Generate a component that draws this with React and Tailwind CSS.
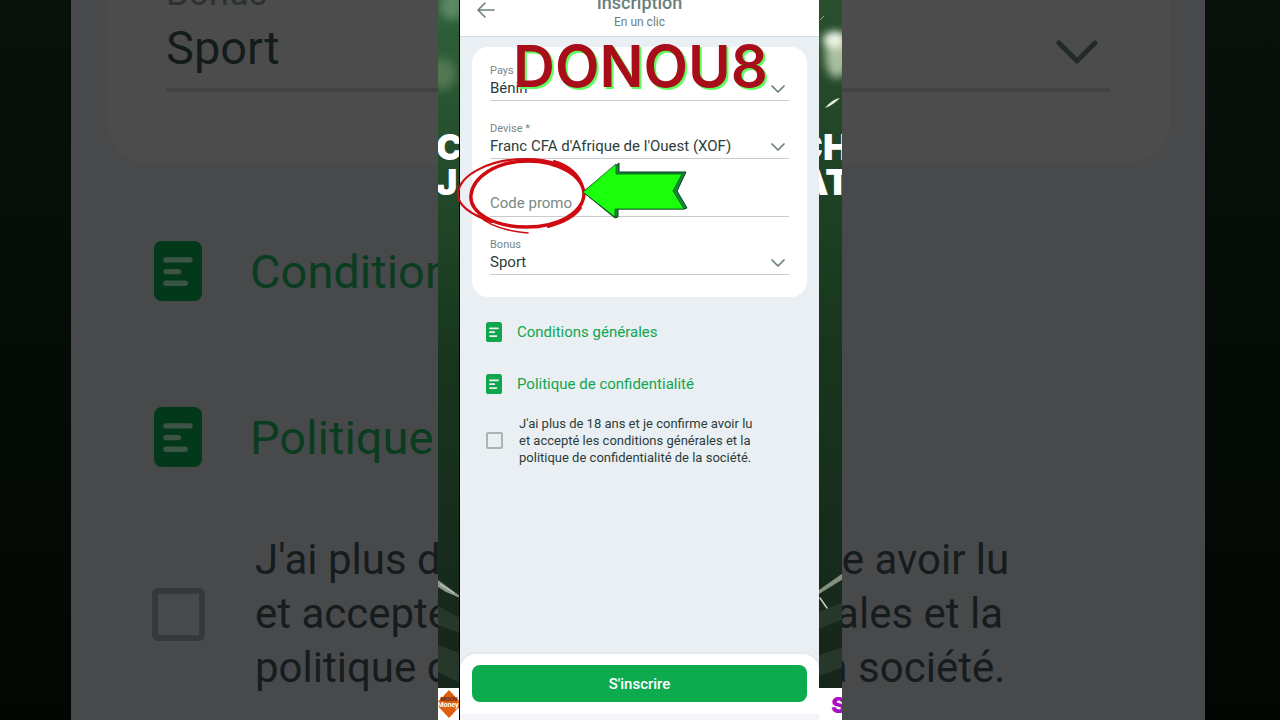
import { useState } from "react";

const CONSENT = [
  "J'ai plus de 18 ans et je confirme avoir lu",
  "et accepté les conditions générales et la",
  "politique de confidentialité de la société.",
];

function Chevron({ className }) {
  return (
    <svg viewBox="0 0 14 8" fill="none" stroke="currentColor" strokeWidth="1.7" strokeLinecap="round" strokeLinejoin="round" className={className}>
      <path d="M1 1l6 6 6-6" />
    </svg>
  );
}

function DocIcon({ className, lines }) {
  return (
    <svg viewBox="0 0 16 20" className={className}>
      <rect width="16" height="20" rx="2.6" fill="currentColor" />
      <path d="M4 6.3h8M4 10.2h4.2M4 14.1h6.4" stroke={lines} strokeWidth="1.8" strokeLinecap="round" />
    </svg>
  );
}

// Enlarged, dimmed copy of the form behind the video
function Backdrop() {
  return (
    <div aria-hidden="true" className="absolute inset-0 overflow-hidden bg-linear-to-b from-[#07110a] to-[#030704] pl-[71px] pr-[75px]">
      <div className="flow-root min-h-screen bg-[#48494b] pl-9 pr-[35px] whitespace-nowrap">
        <div className="rounded-b-[44px] bg-[#4c4c4c] pb-[72px] pl-[59px] pr-[60px]">
          <div className="border-b-4 border-[#414242]">
            <p className="-mt-[28px] h-[42px] text-[36px] leading-[42px] text-[#2c3231]">Bonus</p>
            <div className="flex h-[74px] items-start justify-between pr-3">
              <span className="pt-1 text-[47px] leading-[60px] text-[#141c1b]">Sport</span>
              <Chevron className="mt-[26px] h-6 w-[42px] text-[#232b29]" />
            </div>
          </div>
        </div>
        <div className="flex flex-col gap-[106px] pl-[47px] pt-[77px] text-[#0a3c20]">
          <div className="flex h-[60px] items-center gap-12">
            <DocIcon className="h-[60px] w-12 text-[#04381a]" lines="#3c5445" />
            <span className="pt-[2px] text-[47px] leading-[56px]">Conditions générales</span>
          </div>
          <div className="flex h-[60px] items-center gap-12">
            <DocIcon className="h-[60px] w-12 text-[#04381a]" lines="#3c5445" />
            <span className="pt-[2px] text-[47px] leading-[56px]">Politique de confidentialité</span>
          </div>
        </div>
        <div className="flex items-center gap-[50px] pl-[45px] pt-[66px] text-[42px] leading-[54px] text-[#161c1d]">
          <span className="size-[53px] shrink-0 rounded-md border-[6px] border-[#34393a]" />
          <p>{CONSENT.map((line) => <span key={line} className="block">{line}</span>)}</p>
        </div>
      </div>
    </div>
  );
}

function LeftRail() {
  return (
    <div className="relative flex min-h-screen w-[22px] shrink-0 flex-col overflow-hidden border-r border-black bg-linear-to-b from-[#2f6139] via-[#17351d] to-[#16241a]">
      <svg viewBox="0 0 22 690" className="absolute left-0 top-0 h-[690px] w-[22px]">
        <defs>
          <filter id="softL" x="-1" y="-1" width="3" height="3"><feGaussianBlur stdDeviation="5" /></filter>
        </defs>
        <ellipse cx="14" cy="6" rx="12" ry="14" fill="#6f9b78" opacity=".7" filter="url(#softL)" />
        <ellipse cx="4" cy="74" rx="14" ry="16" fill="#6b8f66" opacity=".6" filter="url(#softL)" />
        <path d="M0 606l22 12v15L0 625zM0 645l22 8v30L0 672z" fill="#2f3f31" opacity=".7" />
        <path d="M0 580l22 16v2L8 592 0 587z" fill="#8b998b" />
        <path d="M2 584l14 9" stroke="#dfe6dc" strokeWidth=".8" />
      </svg>
      <p className="relative -ml-[2px] pt-[130px] font-[Inter,sans-serif] text-[36px] font-black leading-[35px] text-white">C<br />J</p>
      <div className="relative mt-auto h-8 bg-white">
        <svg viewBox="0 0 22 32" className="h-8 w-[22px]">
          <path d="M11 2l13 14-13 14L-2 16z" fill="#dd5f10" />
          <text x="11" y="13" textAnchor="middle" fontSize="6" fontWeight="700" fill="#4a2b1c" fontFamily="Roboto, sans-serif">MOOV</text>
          <text x="10" y="19" textAnchor="middle" fontSize="7" fontWeight="700" fill="#fff" fontFamily="Roboto, sans-serif">Money</text>
        </svg>
      </div>
    </div>
  );
}

function RightRail() {
  return (
    <div className="relative flex min-h-screen w-[23px] shrink-0 flex-col items-end overflow-hidden bg-linear-to-b from-[#28502f] via-[#17351d] to-[#16241a]">
      <svg viewBox="0 0 23 690" className="absolute left-0 top-0 h-[690px] w-[23px]">
        <defs>
          <filter id="softR" x="-1" y="-1" width="3" height="3"><feGaussianBlur stdDeviation="4" /></filter>
        </defs>
        <ellipse cx="18" cy="56" rx="12" ry="22" fill="#a9bf9f" filter="url(#softR)" />
        <ellipse cx="15" cy="40" rx="11" ry="8" fill="#f3f8ea" filter="url(#softR)" />
        <path d="M6 108c4-5 9-9 15-10-4 4-9 8-15 10z" fill="#e4efd9" />
        <path d="M1 20l4-4" stroke="#8fae8c" />
        <path d="M0 612l24-10v17L0 629zM0 655l24-8v20L0 676z" fill="#2f3f31" opacity=".7" />
        <path d="M0 590l24-17v6L0 594z" fill="#84917f" />
        <path d="M1 598l7 10" stroke="#c5cfc0" strokeWidth="1.5" strokeLinecap="round" />
      </svg>
      <p className="relative -mr-2 pt-[130px] text-right font-[Inter,sans-serif] text-[36px] font-black leading-[35px] text-white">CH<br />AT</p>
      <div className="relative mt-auto flex h-8 w-full items-center justify-end overflow-hidden bg-white">
        <span className="-mr-1 pt-[2px] font-[Inter,sans-serif] text-[22px] font-black text-[#a80fc4]">S</span>
      </div>
    </div>
  );
}

function SelectField({ id, label, value }) {
  return (
    <div className="relative border-b border-[#c9cccc]">
      <label htmlFor={id} className="block text-[11px] leading-[16px] text-[#788885]">{label}</label>
      <select id={id} defaultValue={value} className="block h-[21px] w-full appearance-none bg-transparent pb-[3px] text-[15px] leading-[18px] text-[#2b3d3a] outline-none">
        <option>{value}</option>
      </select>
      <Chevron className="pointer-events-none absolute bottom-[7px] right-1 h-2 w-[14px] text-[#6b7f7b]" />
    </div>
  );
}

function PolicyLink({ children }) {
  return (
    <a href="#" className="flex h-5 items-center gap-[15px] text-[15px] text-[#10a64c]">
      <DocIcon className="h-5 w-4" lines="#eaeff4" />
      {children}
    </a>
  );
}

function Annotations() {
  return (
    <>
      <p className="pointer-events-none absolute left-[53px] top-[32px] font-[Inter,sans-serif] text-[58px] font-semibold leading-[68px] text-[#a80d1a] [text-shadow:2px_2px_0_#5dff5d]">DONOU8</p>
      <svg viewBox="0 0 240 90" className="pointer-events-none absolute -left-[10px] top-[150px] h-[90px] w-[240px]">
        <g fill="none" stroke="#cf0a10" strokeLinecap="round">
          <path d="M134 44c-1-19-27-33-56-33-32 0-55 16-57 34-2 17 22 32 56 32 30 0 56-13 57-33z" strokeWidth="3.4" />
          <path d="M131 33C122 15 99 9 76 9 41 9 10 24 8 43c-1 12 14 22 34 29" strokeWidth="2.2" />
          <path d="M104 11c15 4 26 14 29 26" strokeWidth="2" />
          <path d="M28 65c9 9 26 16 50 18" strokeWidth="1.6" />
          <path d="M98 77c12-3 26-9 33-19" strokeWidth="2" />
          <path d="M117 66c5-3 11-8 14-14" strokeWidth="1" />
        </g>
        <path d="M133 42l36-29v9h67l-9 19 10 17-3 1h-66v8l-3 1z" fill="#138a3c" stroke="#0a3d1c" strokeWidth="1" strokeLinejoin="round" />
        <path d="M133 42l33-28v10h66l-9 17 11 18h-69v8z" fill="#1cff0c" stroke="#0a5a1c" strokeWidth=".8" strokeLinejoin="round" />
      </svg>
    </>
  );
}

export default function App() {
  const [promo, setPromo] = useState("");
  const [accepted, setAccepted] = useState(false);

  return (
    <div className="relative flex min-h-screen justify-center overflow-hidden font-[Roboto,sans-serif]">
      <Backdrop />

      <div className="relative flex w-full max-w-[404px]">
        <LeftRail />

        <form onSubmit={(e) => e.preventDefault()} className="relative flex min-h-screen min-w-0 flex-1 flex-col bg-[#eaeff4]">
          {/* Header */}
          <header className="flex h-[37px] items-start border-b border-[#d5dade] bg-white px-4 text-[#6b7f7b]">
            <button type="button" aria-label="Retour" className="w-5 pt-[2px]">
              <svg viewBox="0 0 20 16" fill="none" stroke="currentColor" strokeWidth="1.6" strokeLinecap="round" strokeLinejoin="round" className="h-4 w-5">
                <path d="M18 8H2M9 1L2 8l7 7" />
              </svg>
            </button>
            <div className="flex-1 pr-5 text-center">
              <h1 className="-mt-2 text-[18px] font-medium leading-[22px]">Inscription</h1>
              <p className="text-[12px] leading-[17px]">En un clic</p>
            </div>
          </header>

          {/* Form card */}
          <div className="mx-3 mt-[10px] flex flex-col gap-5 rounded-2xl bg-white px-[18px] pb-[22px] pt-4">
            <SelectField id="pays" label="Pays" value="Bénin" />
            <SelectField id="devise" label="Devise *" value="Franc CFA d'Afrique de l'Ouest (XOF)" />
            <div className="border-b border-[#c9cccc] pt-3">
              <label htmlFor="promo" className="sr-only">Code promo</label>
              <input id="promo" value={promo} onChange={(e) => setPromo(e.target.value)} placeholder="Code promo"
                className="block h-[25px] w-full bg-transparent pb-[2px] text-[15px] outline-none placeholder:text-[#788885]" />
            </div>
            <SelectField id="bonus" label="Bonus" value="Sport" />
          </div>

          {/* Policies */}
          <div className="flex flex-col gap-8 px-[26px] pt-[25px]">
            <PolicyLink>Conditions générales</PolicyLink>
            <PolicyLink>Politique de confidentialité</PolicyLink>
          </div>
          <label className="flex items-center gap-4 px-[26px] pt-[21px] text-[13px] leading-[17px] text-[#2b3d3a]">
            <input type="checkbox" checked={accepted} onChange={(e) => setAccepted(e.target.checked)}
              className="size-[17px] shrink-0 appearance-none rounded-[2px] border-2 border-[#a9b4b4] checked:bg-[#10a64c]" />
            <span>{CONSENT.map((line) => <span key={line} className="block whitespace-nowrap">{line}</span>)}</span>
          </label>

          {/* Footer */}
          <footer className="mt-auto rounded-t-2xl bg-white shadow-[0_-1px_3px_rgba(0,0,0,0.06)]">
            <div className="px-3 pb-3 pt-[11px]">
              <button type="submit" className="block h-[37px] w-full rounded-lg bg-[#0eaa4e] pt-[1px] text-[15px] font-medium text-white">
                S'inscrire
              </button>
            </div>
            <div className="h-[6px] bg-[#f3f5fa]" />
          </footer>

          <Annotations />
        </form>

        <RightRail />
      </div>
    </div>
  );
}
